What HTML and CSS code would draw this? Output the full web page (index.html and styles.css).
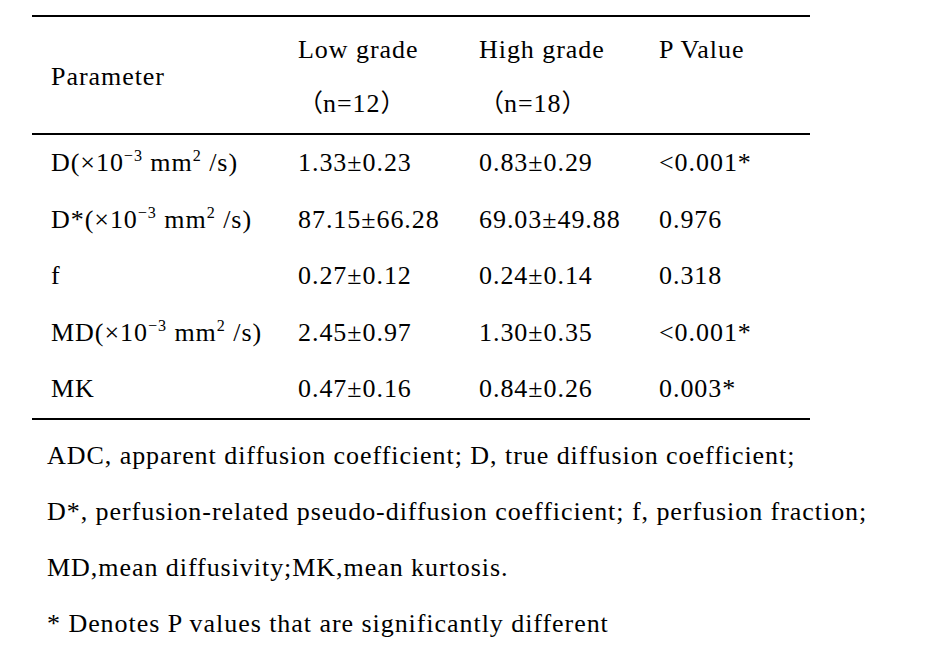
FILE: index.html
```html
<!DOCTYPE html>
<html lang="en">
<head>
<meta charset="utf-8">
<title>DKI and IVIM parameters</title>
<link rel="stylesheet" href="styles.css">
</head>
<body>
<div class="page">
  <table class="data">
    <colgroup>
      <col class="c1"><col class="c2"><col class="c3"><col class="c4">
    </colgroup>
    <thead>
      <tr>
        <th class="param">Parameter</th>
        <th><span class="ln">Low grade</span><span class="ln"><span class="fw">（</span>n=12<span class="fw">）</span></span></th>
        <th><span class="ln">High grade</span><span class="ln"><span class="fw">（</span>n=18<span class="fw">）</span></span></th>
        <th><span class="ln">P Value</span><span class="ln">&nbsp;</span></th>
      </tr>
    </thead>
    <tbody>
      <tr><td>D(×10<sup>−3</sup> mm<sup>2</sup> /s)</td><td>1.33±0.23</td><td>0.83±0.29</td><td>&lt;0.001*</td></tr>
      <tr><td>D*(×10<sup>−3</sup> mm<sup>2</sup> /s)</td><td>87.15±66.28</td><td>69.03±49.88</td><td>0.976</td></tr>
      <tr><td>f</td><td>0.27±0.12</td><td>0.24±0.14</td><td>0.318</td></tr>
      <tr><td>MD(×10<sup>−3</sup> mm<sup>2</sup> /s)</td><td>2.45±0.97</td><td>1.30±0.35</td><td>&lt;0.001*</td></tr>
      <tr class="last"><td>MK</td><td>0.47±0.16</td><td>0.84±0.26</td><td>0.003*</td></tr>
    </tbody>
  </table>
  <div class="notes">
    <p>ADC, apparent diffusion coefficient; D, true diffusion coefficient;</p>
    <p>D*, perfusion-related pseudo-diffusion coefficient; f, perfusion fraction;</p>
    <p>MD,mean diffusivity;MK,mean kurtosis.</p>
    <p>* Denotes P values that are significantly different</p>
  </div>
</div>
</body>
</html>
```
FILE: styles.css
```css
html, body {
  margin: 0;
  padding: 0;
  background: #fff;
}
body {
  font-family: "Liberation Serif", "Times New Roman", "Noto Sans CJK SC", serif;
  font-size: 26px;
  color: #000;
  letter-spacing: 0.95px;
}
.page {
  padding: 15px 0 0 32px;
}
.data {
  border-collapse: separate;
  border-spacing: 0;
  table-layout: fixed;
  width: 778px;
}
.c1 { width: 247px; }
.c2 { width: 181px; }
.c3 { width: 180px; }
.c4 { width: 170px; }
.data th {
  font-weight: normal;
  text-align: left;
  vertical-align: top;
  padding: 6px 0 2px 19px;
  line-height: 54px;
  border-top: 2px solid #000;
  border-bottom: 2px solid #000;
}
.data th.param {
  vertical-align: middle;
}
.ln {
  display: block;
  white-space: nowrap;
}
.fw {
  font-family: "Noto Sans CJK SC", sans-serif;
  font-size: 25px;
  letter-spacing: 0;
  line-height: 1;
}
.data td {
  padding: 0 0 0 19px;
  height: 56.6px;
  line-height: 56.6px;
  white-space: nowrap;
  vertical-align: middle;
}
.data tr.last td {
  border-bottom: 2px solid #000;
}
sup {
  font-size: 0.62em;
  line-height: 0;
  vertical-align: 0.6em;
}
.notes {
  padding: 8px 0 0 15px;
}
.notes p {
  margin: 0;
  line-height: 56px;
  white-space: nowrap;
}
```
